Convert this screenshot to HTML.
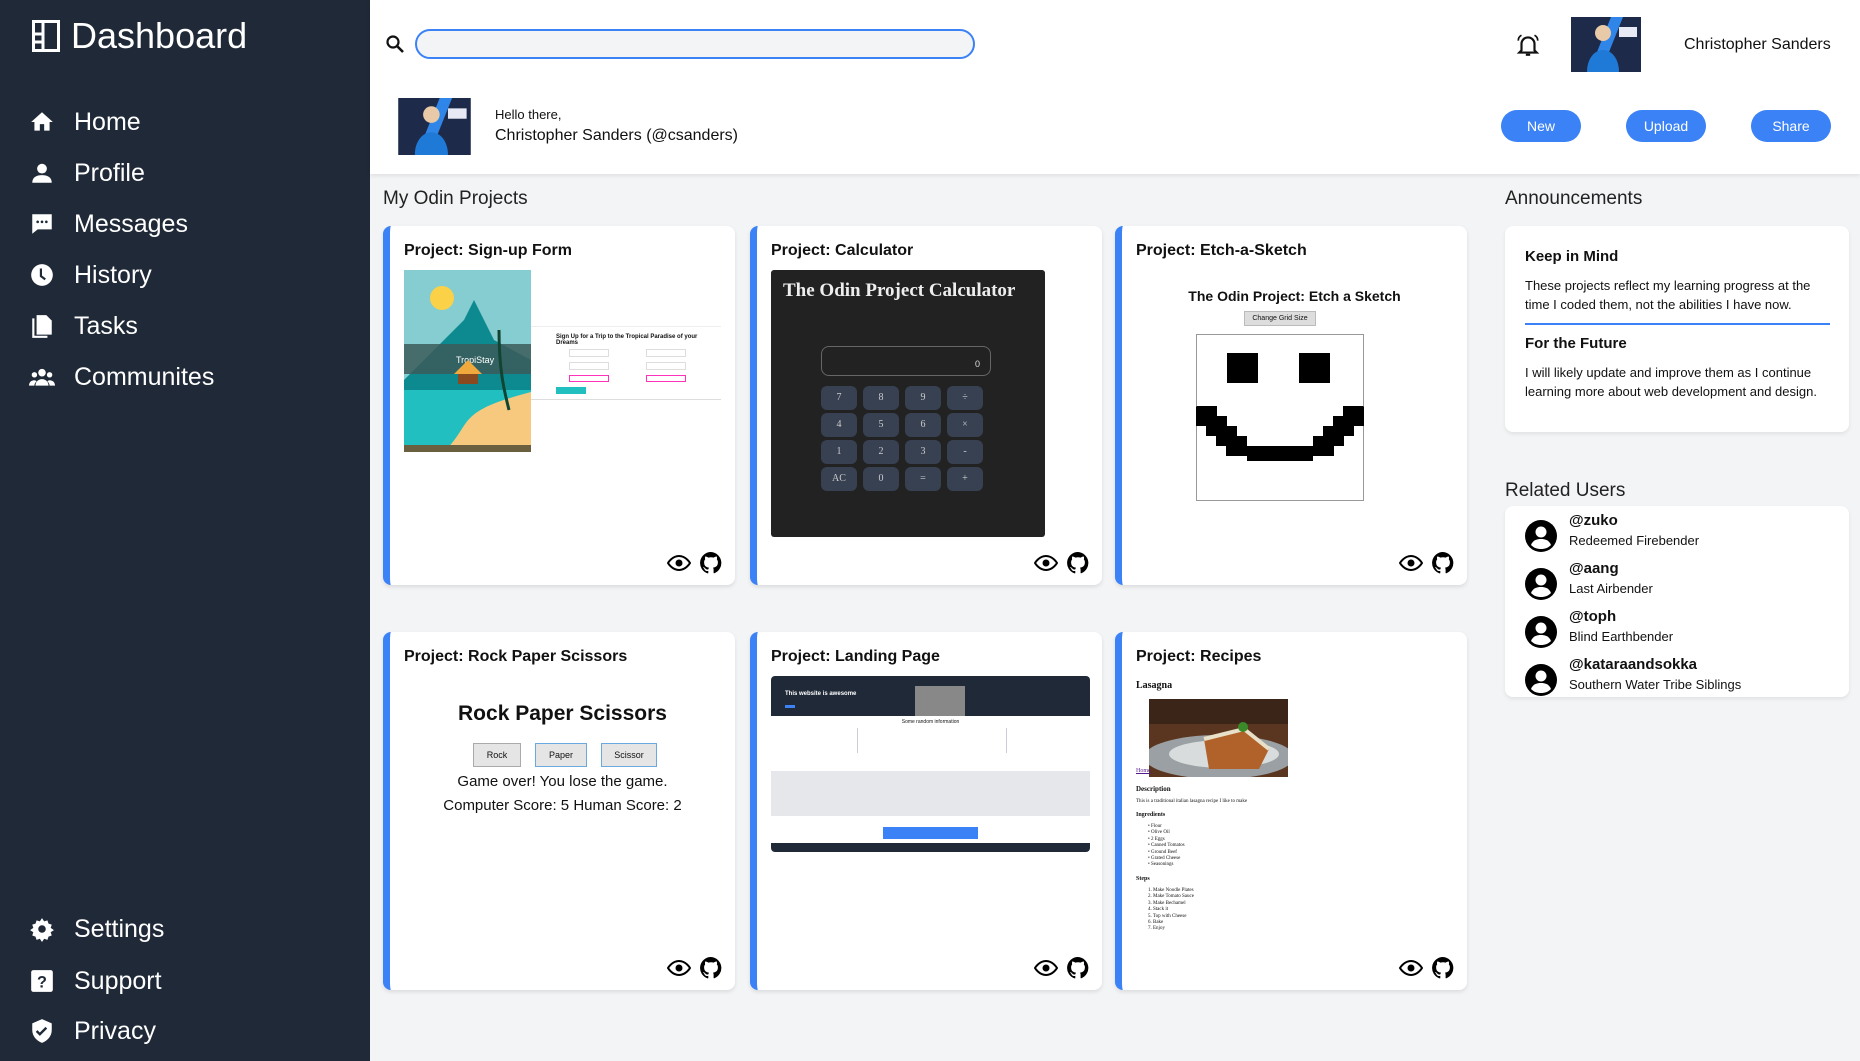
<!DOCTYPE html>
<html><head><meta charset="utf-8"><style>
*{box-sizing:border-box;margin:0;padding:0}
body{width:1860px;height:1061px;overflow:hidden;background:#f3f4f6;font-family:"Liberation Sans",sans-serif;position:relative;color:#111}
.abs{position:absolute}
#side{left:0;top:0;width:370px;height:1061px;background:#1f2937;color:#fff}
.nav{position:absolute;left:74px;font-size:25px;line-height:30px}
.ico{position:absolute;left:29px;width:26px;height:26px}
#head{left:370px;top:0;width:1490px;height:174px;background:#fff;box-shadow:0 2px 4px rgba(0,0,0,.08)}
.btn{position:absolute;top:110px;width:80px;height:32px;border-radius:16px;background:#3b82f6;color:#fff;font-size:14px;text-align:center;line-height:32px}
.card{position:absolute;width:352px;background:#fff;border-radius:8px;border-left:7px solid #3b82f6;box-shadow:0 2px 4px rgba(0,0,0,.1);overflow:hidden}
.ct{position:absolute;left:14px;top:16px;font-size:16px;font-weight:bold}
.icons{position:absolute;right:12px;bottom:10px;display:flex;gap:8px}
.h2{position:absolute;font-size:19px;color:#222}
.ann{position:absolute;background:#fff;border-radius:8px;box-shadow:0 2px 4px rgba(0,0,0,.08)}
.user{position:absolute;left:20px}
.user .n{position:absolute;left:44px;top:0;font-weight:bold;font-size:15px}
.user .s{position:absolute;left:44px;top:21px;font-size:13px;white-space:nowrap}
.cb{position:absolute;width:36px;height:24px;border-radius:6px;background:#374151;color:#ccc;font-size:10px;text-align:center;line-height:24px;font-family:"Liberation Serif",serif}
</style></head><body>
<div id="side" class="abs">
 <svg class="abs" style="left:32px;top:20px" width="28" height="32" viewBox="0 0 28 32"><rect x="1.5" y="1.5" width="25" height="29" fill="none" stroke="#fff" stroke-width="3"/><path d="M11 2v28M2 14h9M2 22h9" stroke="#fff" stroke-width="3"/></svg>
 <div class="abs" style="left:71px;top:15px;font-size:36px">Dashboard</div>
 <svg class="ico" style="top:109px" viewBox="0 0 24 24"><path d="M12 3L2 12h3v8h5v-6h4v6h5v-8h3z" fill="#fff"/></svg>
 <div class="nav" style="top:107px">Home</div>
 <svg class="ico" style="top:160px" viewBox="0 0 24 24"><circle cx="12" cy="8" r="4.5" fill="#fff"/><path d="M3 21c0-5 4-7 9-7s9 2 9 7z" fill="#fff"/></svg>
 <div class="nav" style="top:158px">Profile</div>
 <svg class="ico" style="top:211px" viewBox="0 0 24 24"><path d="M3 3h18v14H8l-5 4z" fill="#fff"/><circle cx="8" cy="10" r="1.2" fill="#1f2937"/><circle cx="12" cy="10" r="1.2" fill="#1f2937"/><circle cx="16" cy="10" r="1.2" fill="#1f2937"/></svg>
 <div class="nav" style="top:209px">Messages</div>
 <svg class="ico" style="top:262px" viewBox="0 0 24 24"><circle cx="12" cy="12" r="10" fill="#fff"/><path d="M11 6v7l4 3" stroke="#1f2937" stroke-width="2" fill="none"/></svg>
 <div class="nav" style="top:260px">History</div>
 <svg class="ico" style="top:313px" viewBox="0 0 24 24"><path d="M7 2h9l5 5v13H7z" fill="#fff"/><path d="M4 5v17h13" stroke="#fff" stroke-width="2" fill="none"/></svg>
 <div class="nav" style="top:311px">Tasks</div>
 <svg class="ico" style="top:364px" viewBox="0 0 24 24"><circle cx="12" cy="8" r="3.5" fill="#fff"/><circle cx="5" cy="10" r="2.5" fill="#fff"/><circle cx="19" cy="10" r="2.5" fill="#fff"/><path d="M6 20c0-4 3-6 6-6s6 2 6 6zM0 20c0-3 2-5 5-5 1 0 2 1 2 1-1 1-2 2-2 4zM24 20c0-3-2-5-5-5-1 0-2 1-2 1 1 1 2 2 2 4z" fill="#fff"/></svg>
 <div class="nav" style="top:362px">Communites</div>
 <svg class="ico" style="top:916px" viewBox="0 0 24 24"><path d="M12 2l2 3 3-1 1 3 3 1-1 3 3 2-3 2 1 3-3 1-1 3-3-1-2 3-2-3-3 1-1-3-3-1 1-3-3-2 3-2-1-3 3-1 1-3 3 1z" fill="#fff"/><circle cx="12" cy="12" r="3.5" fill="#1f2937"/></svg>
 <div class="nav" style="top:914px">Settings</div>
 <svg class="ico" style="top:968px" viewBox="0 0 24 24"><rect x="2" y="2" width="20" height="20" rx="2" fill="#fff"/><text x="12" y="18" font-size="15" font-weight="bold" text-anchor="middle" fill="#1f2937" font-family="Liberation Sans">?</text></svg>
 <div class="nav" style="top:966px">Support</div>
 <svg class="ico" style="top:1018px" viewBox="0 0 24 24"><path d="M12 1l9 4v6c0 6-4 10-9 12C7 21 3 17 3 11V5z" fill="#fff"/><path d="M7 12l3 3 6-6" stroke="#1f2937" stroke-width="2.2" fill="none"/></svg>
 <div class="nav" style="top:1016px">Privacy</div>
</div>

<div id="head" class="abs">
 <svg class="abs" style="left:15px;top:34px" width="20" height="20" viewBox="0 0 20 20"><circle cx="8" cy="8" r="5.5" fill="none" stroke="#111" stroke-width="2.2"/><path d="M12 12l6 6" stroke="#111" stroke-width="2.6"/></svg>
 <div class="abs" style="left:45px;top:29px;width:560px;height:30px;border:2px solid #3b82f6;border-radius:15px;background:#f3f4f6"></div>
 <svg class="abs" style="left:1145px;top:32px" width="26" height="26" viewBox="0 0 24 24"><path d="M6 17V11a6 6 0 0112 0v6l2 2H4z" fill="none" stroke="#111" stroke-width="2"/><path d="M10 21h4" stroke="#111" stroke-width="2"/><path d="M3 8c0-2 1-4 3-5M21 8c0-2-1-4-3-5" stroke="#111" stroke-width="1.6" fill="none"/></svg>
 <svg class="abs" style="left:1201px;top:17px" width="70" height="55" viewBox="0 0 70 55"><rect width="70" height="55" fill="#1e2a4a"/><path d="M40 0h12L30 55H18z" fill="#2f86e8"/><circle cx="32" cy="16" r="8" fill="#e8c9a8"/><path d="M16 55c0-14 8-22 16-22s16 8 16 22z" fill="#1e7ad6"/><rect x="48" y="10" width="18" height="10" fill="#e7e9f5"/></svg>
 <div class="abs" style="left:1314px;top:36px;font-size:16px">Christopher Sanders</div>
 <svg class="abs" style="left:28px;top:98px" width="73" height="57" viewBox="0 0 70 55"><rect width="70" height="55" fill="#1e2a4a"/><path d="M40 0h12L30 55H18z" fill="#2f86e8"/><circle cx="32" cy="16" r="8" fill="#e8c9a8"/><path d="M16 55c0-14 8-22 16-22s16 8 16 22z" fill="#1e7ad6"/><rect x="48" y="10" width="18" height="10" fill="#e7e9f5"/></svg>
 <div class="abs" style="left:125px;top:107px;font-size:13px">Hello there,</div>
 <div class="abs" style="left:125px;top:127px;font-size:16px">Christopher Sanders (@csanders)</div>
 <div class="btn" style="left:1131px">New</div>
 <div class="btn" style="left:1256px">Upload</div>
 <div class="btn" style="left:1381px">Share</div>
</div>

<div class="h2" style="left:383px;top:188px">My Odin Projects</div>

<!-- Row 1 -->
<div class="card" style="left:383px;top:226px;height:359px">
 <div class="ct">Project: Sign-up Form</div>
 <svg class="abs" style="left:14px;top:44px" width="127" height="182" viewBox="0 0 127 182"><rect width="127" height="182" fill="#85cdd0"/><circle cx="38" cy="28" r="12" fill="#fbd147"/><path d="M0 110L40 70 60 50 70 30 90 70 127 90V182H0z" fill="#0d8a8f"/><rect y="74" width="127" height="30" fill="#3c5a5a" opacity=".85"/><text x="52" y="93" font-size="9" fill="#fff" font-family="Liberation Sans">TropiStay</text><path d="M0 120h127v62H0z" fill="#22bfc0"/><path d="M40 182c30-30 10-40 87-60v60z" fill="#f7c97e"/><path d="M50 104l14-14 14 14z" fill="#f0a93c"/><rect x="54" y="104" width="20" height="10" fill="#8a4a20"/><path d="M95 60c0 40 5 60 10 80" stroke="#143" stroke-width="3" fill="none"/><rect y="175" width="127" height="7" fill="#6a6040"/></svg>
 <div class="abs" style="left:141px;top:100px;width:190px;height:74px;border-top:1px solid #eee;border-bottom:1px solid #ddd">
  <div class="abs" style="left:25px;top:7px;font-size:6px;font-weight:bold">Sign Up for a Trip to the Tropical Paradise of your Dreams</div>
  <div class="abs" style="left:38px;top:22px;width:40px;height:8px;border:1px solid #ddd"></div><div class="abs" style="left:115px;top:22px;width:40px;height:8px;border:1px solid #ddd"></div>
  <div class="abs" style="left:38px;top:35px;width:40px;height:8px;border:1px solid #ddd"></div><div class="abs" style="left:115px;top:35px;width:40px;height:8px;border:1px solid #ddd"></div>
  <div class="abs" style="left:38px;top:48px;width:40px;height:7px;border:1px solid #f3b"></div><div class="abs" style="left:115px;top:48px;width:40px;height:7px;border:1px solid #f3b"></div>
  <div class="abs" style="left:25px;top:60px;width:30px;height:7px;background:#22bfc0"></div>
 </div>
 <div class="icons"><svg width="24" height="24" viewBox="0 0 24 24"><path d="M1 12s4-7 11-7 11 7 11 7-4 7-11 7S1 12 1 12z" fill="none" stroke="#000" stroke-width="2"/><circle cx="12" cy="12" r="3.5"/></svg><svg width="24" height="24" viewBox="0 0 24 24"><path d="M12 1a11 11 0 00-3.5 21.4c.6.1.8-.2.8-.5v-2c-3 .7-3.7-1.4-3.7-1.4-.5-1.3-1.2-1.6-1.2-1.6-1-.7.1-.7.1-.7 1.1.1 1.7 1.1 1.7 1.1 1 1.7 2.6 1.2 3.2.9.1-.7.4-1.2.7-1.5-2.4-.3-5-1.2-5-5.4 0-1.2.4-2.2 1.1-2.9-.1-.3-.5-1.4.1-2.9 0 0 .9-.3 3 1.1a10 10 0 015.4 0c2.1-1.4 3-1.1 3-1.1.6 1.5.2 2.6.1 2.9.7.7 1.1 1.7 1.1 2.9 0 4.2-2.6 5.1-5 5.4.4.3.7 1 .7 2v3c0 .3.2.6.8.5A11 11 0 0012 1z"/></svg></div>
</div>

<div class="card" style="left:750px;top:226px;height:359px">
 <div class="ct">Project: Calculator</div>
 <div class="abs" style="left:14px;top:44px;width:274px;height:267px;background:#222;border-radius:3px">
  <div class="abs" style="left:12px;top:10px;font-family:'Liberation Serif',serif;font-weight:bold;color:#eee;font-size:19px">The Odin Project Calculator</div>
  <div class="abs" style="left:50px;top:76px;width:170px;height:30px;border:1px solid #666;border-radius:8px;color:#ddd;font-size:9px;text-align:right;padding:12px 10px 0 0">0</div>
  <div class="cb" style="left:50px;top:116px">7</div><div class="cb" style="left:92px;top:116px">8</div><div class="cb" style="left:134px;top:116px">9</div><div class="cb" style="left:176px;top:116px">÷</div>
  <div class="cb" style="left:50px;top:143px">4</div><div class="cb" style="left:92px;top:143px">5</div><div class="cb" style="left:134px;top:143px">6</div><div class="cb" style="left:176px;top:143px">×</div>
  <div class="cb" style="left:50px;top:170px">1</div><div class="cb" style="left:92px;top:170px">2</div><div class="cb" style="left:134px;top:170px">3</div><div class="cb" style="left:176px;top:170px">-</div>
  <div class="cb" style="left:50px;top:197px">AC</div><div class="cb" style="left:92px;top:197px">0</div><div class="cb" style="left:134px;top:197px">=</div><div class="cb" style="left:176px;top:197px">+</div>
 </div>
 <div class="icons"><svg width="24" height="24" viewBox="0 0 24 24"><path d="M1 12s4-7 11-7 11 7 11 7-4 7-11 7S1 12 1 12z" fill="none" stroke="#000" stroke-width="2"/><circle cx="12" cy="12" r="3.5"/></svg><svg width="24" height="24" viewBox="0 0 24 24"><path d="M12 1a11 11 0 00-3.5 21.4c.6.1.8-.2.8-.5v-2c-3 .7-3.7-1.4-3.7-1.4-.5-1.3-1.2-1.6-1.2-1.6-1-.7.1-.7.1-.7 1.1.1 1.700 1.1 1.7 1.1 1 1.7 2.6 1.2 3.2.9.1-.7.4-1.2.7-1.5-2.4-.3-5-1.200-5-5.4 0-1.2.4-2.2 1.1-2.9-.1-.3-.5-1.4.1-2.9 0 0 .9-.3 3 1.1a10 10 0 015.4 0c2.1-1.4 3-1.1 3-1.1.6 1.5.2 2.6.1 2.9.7.7 1.1 1.7 1.1 2.9 0 4.2-2.6 5.1-5 5.4.4.3.7 1 .7 2v3c0 .3.2.6.8.5A11 11 0 0012 1z"/></svg></div>
</div>

<div class="card" style="left:1115px;top:226px;height:359px">
 <div class="ct">Project: Etch-a-Sketch</div>
 <div class="abs" style="left:0;width:345px;top:62px;text-align:center;font-size:14px;font-weight:bold">The Odin Project: Etch a Sketch</div>
 <div class="abs" style="left:122px;top:85px;width:72px;height:15px;background:#ddd;border:1px solid #bbb;font-size:7px;text-align:center;line-height:13px">Change Grid Size</div>
 <svg class="abs" style="left:74px;top:108px" width="168" height="167" viewBox="0 0 168 167"><rect x=".5" y=".5" width="167" height="166" fill="#fff" stroke="#999"/><rect x="31" y="19" width="31" height="30"/><rect x="103" y="19" width="31" height="30"/><path d="M1 72h20v10h10v10h10v10h10v10h10v10h-31v-10h-10v-10h-10v-10h-10v-10h-10zM167 72h-20v10h-10v10h-10v10h-10v10h-10v10h31v-10h10v-10h10v-10h10v-10h10z"/><rect x="51" y="112" width="66" height="15"/></svg>
 <div class="icons"><svg width="24" height="24" viewBox="0 0 24 24"><path d="M1 12s4-7 11-7 11 7 11 7-4 7-11 7S1 12 1 12z" fill="none" stroke="#000" stroke-width="2"/><circle cx="12" cy="12" r="3.5"/></svg><svg width="24" height="24" viewBox="0 0 24 24"><path d="M12 1a11 11 0 00-3.5 21.4c.6.1.8-.2.8-.5v-2c-3 .7-3.7-1.4-3.7-1.4-.5-1.3-1.2-1.6-1.2-1.6-1-.7.1-.7.1-.7 1.1.1 1.7 1.1 1.7 1.1 1 1.7 2.6 1.2 3.2.9.1-.7.4-1.2.7-1.5-2.4-.3-5-1.2-5-5.4 0-1.2.4-2.2 1.1-2.9-.1-.3-.5-1.4.1-2.9 0 0 .9-.3 3 1.1a10 10 0 015.4 0c2.1-1.4 3-1.1 3-1.1.6 1.5.2 2.6.1 2.9.7.7 1.1 1.7 1.1 2.9 0 4.2-2.6 5.1-5 5.4.4.3.7 1 .7 2v3c0 .3.2.6.8.5A11 11 0 0012 1z"/></svg></div>
</div>

<!-- Row 2 -->
<div class="card" style="left:383px;top:632px;height:358px">
 <div class="ct">Project: Rock Paper Scissors</div>
 <div class="abs" style="left:0;width:345px;top:70px;text-align:center;font-size:21px;font-weight:bold">Rock Paper Scissors</div>
 <div class="abs" style="left:83px;top:111px;width:48px;height:24px;background:#e5e5e5;border:1px solid #aaa;font-size:9px;text-align:center;line-height:22px">Rock</div>
 <div class="abs" style="left:145px;top:111px;width:52px;height:24px;background:#e5e5e5;border:1px solid #6aa8e0;font-size:9px;text-align:center;line-height:22px">Paper</div>
 <div class="abs" style="left:211px;top:111px;width:56px;height:24px;background:#e5e5e5;border:1px solid #6aa8e0;font-size:9px;text-align:center;line-height:22px">Scissor</div>
 <div class="abs" style="left:0;width:345px;top:141px;text-align:center;font-size:15px">Game over! You lose the game.</div>
 <div class="abs" style="left:0;width:345px;top:165px;text-align:center;font-size:15px">Computer Score: 5 Human Score: 2</div>
 <div class="icons"><svg width="24" height="24" viewBox="0 0 24 24"><path d="M1 12s4-7 11-7 11 7 11 7-4 7-11 7S1 12 1 12z" fill="none" stroke="#000" stroke-width="2"/><circle cx="12" cy="12" r="3.5"/></svg><svg width="24" height="24" viewBox="0 0 24 24"><path d="M12 1a11 11 0 00-3.5 21.4c.6.1.8-.2.8-.5v-2c-3 .7-3.7-1.4-3.7-1.4-.5-1.3-1.2-1.6-1.2-1.6-1-.7.1-.7.1-.7 1.1.1 1.7 1.1 1.7 1.1 1 1.7 2.6 1.2 3.2.9.1-.7.4-1.2.7-1.5-2.4-.3-5-1.2-5-5.4 0-1.2.4-2.2 1.1-2.9-.1-.3-.5-1.4.1-2.9 0 0 .9-.3 3 1.1a10 10 0 015.4 0c2.1-1.4 3-1.1 3-1.1.6 1.5.2 2.6.1 2.9.7.7 1.1 1.7 1.1 2.9 0 4.2-2.6 5.1-5 5.4.4.3.7 1 .7 2v3c0 .3.2.6.8.5A11 11 0 0012 1z"/></svg></div>
</div>

<div class="card" style="left:750px;top:632px;height:358px">
 <div class="ct">Project: Landing Page</div>
 <div class="abs" style="left:14px;top:44px;width:319px;height:175px">
  <div class="abs" style="left:0;top:0;width:319px;height:40px;background:#1f2937;border-radius:4px 4px 0 0"></div>
  <div class="abs" style="left:14px;top:15px;font-size:6px;color:#fff;font-weight:bold">This website is awesome</div>
  <div class="abs" style="left:14px;top:29px;width:10px;height:3px;background:#3b82f6"></div>
  <div class="abs" style="left:144px;top:10px;width:50px;height:30px;background:#888"></div>
  <div class="abs" style="left:0;top:43px;width:319px;text-align:center;font-size:5px">Some random information</div>
  <div class="abs" style="left:86px;top:52px;width:150px;height:25px;border-left:1px solid #ccd;border-right:1px solid #ccd"></div>
  <div class="abs" style="left:0;top:95px;width:319px;height:45px;background:#e5e7eb"></div>
  <div class="abs" style="left:112px;top:151px;width:95px;height:12px;background:#3b82f6"></div>
  <div class="abs" style="left:0;top:167px;width:319px;height:9px;background:#1f2937;border-radius:0 0 4px 4px"></div>
 </div>
 <div class="icons"><svg width="24" height="24" viewBox="0 0 24 24"><path d="M1 12s4-7 11-7 11 7 11 7-4 7-11 7S1 12 1 12z" fill="none" stroke="#000" stroke-width="2"/><circle cx="12" cy="12" r="3.5"/></svg><svg width="24" height="24" viewBox="0 0 24 24"><path d="M12 1a11 11 0 00-3.5 21.4c.6.1.8-.2.8-.5v-2c-3 .7-3.7-1.4-3.7-1.4-.5-1.3-1.2-1.6-1.2-1.6-1-.7.1-.7.1-.7 1.1.1 1.7 1.1 1.7 1.1 1 1.7 2.6 1.2 3.2.9.1-.7.4-1.2.7-1.5-2.4-.3-5-1.2-5-5.4 0-1.2.4-2.2 1.1-2.9-.1-.3-.5-1.4.1-2.9 0 0 .9-.3 3 1.1a10 10 0 015.4 0c2.1-1.4 3-1.1 3-1.1.6 1.5.2 2.6.1 2.9.7.7 1.1 1.7 1.1 2.9 0 4.2-2.6 5.1-5 5.4.4.3.7 1 .7 2v3c0 .3.2.6.8.5A11 11 0 0012 1z"/></svg></div>
</div>

<div class="card" style="left:1115px;top:632px;height:358px;font-family:'Liberation Serif',serif">
 <div class="ct" style="font-family:'Liberation Sans',sans-serif">Project: Recipes</div>
 <div class="abs" style="left:14px;top:48px;font-size:10px;font-weight:bold">Lasagna</div>
 <svg class="abs" style="left:27px;top:67px" width="139" height="78" viewBox="0 0 139 78"><rect width="139" height="78" fill="#5a3520"/><rect y="0" width="139" height="25" fill="#3a2518"/><ellipse cx="70" cy="58" rx="75" ry="22" fill="#9aa0a3"/><ellipse cx="75" cy="55" rx="55" ry="14" fill="#d8dcdc"/><path d="M55 40l40-10 25 20-10 20-50 0z" fill="#b0622a"/><path d="M55 40l40-10 25 20" fill="none" stroke="#e8e0c8" stroke-width="4"/><circle cx="94" cy="28" r="5" fill="#3a8a2a"/></svg>
 <div class="abs" style="left:14px;top:136px;font-size:6px;color:#551a8b;text-decoration:underline">Home</div>
 <div class="abs" style="left:14px;top:153px;font-size:7px;font-weight:bold">Description</div>
 <div class="abs" style="left:14px;top:167px;font-size:5px">This is a traditional italian lasagna recipe I like to make</div>
 <div class="abs" style="left:14px;top:180px;font-size:6px;font-weight:bold">Ingredients</div>
 <div class="abs" style="left:26px;top:192px;font-size:5px;line-height:6.4px">• Flour<br>• Olive Oil<br>• 2 Eggs<br>• Canned Tomatos<br>• Ground Beef<br>• Grated Cheese<br>• Seasonings</div>
 <div class="abs" style="left:14px;top:244px;font-size:6px;font-weight:bold">Steps</div>
 <div class="abs" style="left:26px;top:256px;font-size:5px;line-height:6.4px">1. Make Noodle Plates<br>2. Make Tomato Sauce<br>3. Make Bechamel<br>4. Stack it<br>5. Top with Cheese<br>6. Bake<br>7. Enjoy</div>
 <div class="icons"><svg width="24" height="24" viewBox="0 0 24 24"><path d="M1 12s4-7 11-7 11 7 11 7-4 7-11 7S1 12 1 12z" fill="none" stroke="#000" stroke-width="2"/><circle cx="12" cy="12" r="3.5"/></svg><svg width="24" height="24" viewBox="0 0 24 24"><path d="M12 1a11 11 0 00-3.5 21.4c.6.1.8-.2.8-.5v-2c-3 .7-3.7-1.4-3.7-1.4-.5-1.3-1.2-1.6-1.2-1.6-1-.7.1-.7.1-.7 1.1.1 1.7 1.1 1.7 1.1 1 1.7 2.6 1.2 3.2.9.1-.7.4-1.2.7-1.5-2.4-.3-5-1.2-5-5.4 0-1.2.4-2.2 1.1-2.9-.1-.3-.5-1.4.1-2.9 0 0 .9-.3 3 1.1a10 10 0 015.4 0c2.1-1.4 3-1.1 3-1.1.6 1.5.2 2.6.1 2.9.7.7 1.1 1.7 1.1 2.9 0 4.2-2.6 5.1-5 5.4.4.3.7 1 .7 2v3c0 .3.2.6.8.5A11 11 0 0012 1z"/></svg></div>
</div>

<!-- Right column -->
<div class="h2" style="left:1505px;top:188px">Announcements</div>
<div class="ann" style="left:1505px;top:226px;width:344px;height:206px">
 <div class="abs" style="left:20px;top:22px;font-size:15px;font-weight:bold">Keep in Mind</div>
 <div class="abs" style="left:20px;top:50px;font-size:13px;line-height:19px;width:310px">These projects reflect my learning progress at the time I coded them, not the abilities I have now.</div>
 <div class="abs" style="left:20px;top:97px;width:305px;height:2px;background:#3b82f6"></div>
 <div class="abs" style="left:20px;top:109px;font-size:15px;font-weight:bold">For the Future</div>
 <div class="abs" style="left:20px;top:137px;font-size:13px;line-height:19px;width:310px">I will likely update and improve them as I continue learning more about web development and design.</div>
</div>
<div class="h2" style="left:1505px;top:480px">Related Users</div>
<div class="ann" style="left:1505px;top:506px;width:344px;height:191px">
 <div class="user" style="top:6px"><svg class="abs" style="left:0;top:8px" width="32" height="32" viewBox="0 0 32 32"><circle cx="16" cy="16" r="16"/><circle cx="16" cy="12" r="5.5" fill="#fff"/><path d="M6 25c2-5 6-6 10-6s8 1 10 6c-3 3-6 4-10 4s-7-1-10-4z" fill="#fff"/></svg><div class="n">@zuko</div><div class="s">Redeemed Firebender</div></div>
 <div class="user" style="top:54px"><svg class="abs" style="left:0;top:8px" width="32" height="32" viewBox="0 0 32 32"><circle cx="16" cy="16" r="16"/><circle cx="16" cy="12" r="5.5" fill="#fff"/><path d="M6 25c2-5 6-6 10-6s8 1 10 6c-3 3-6 4-10 4s-7-1-10-4z" fill="#fff"/></svg><div class="n">@aang</div><div class="s">Last Airbender</div></div>
 <div class="user" style="top:102px"><svg class="abs" style="left:0;top:8px" width="32" height="32" viewBox="0 0 32 32"><circle cx="16" cy="16" r="16"/><circle cx="16" cy="12" r="5.5" fill="#fff"/><path d="M6 25c2-5 6-6 10-6s8 1 10 6c-3 3-6 4-10 4s-7-1-10-4z" fill="#fff"/></svg><div class="n">@toph</div><div class="s">Blind Earthbender</div></div>
 <div class="user" style="top:150px"><svg class="abs" style="left:0;top:8px" width="32" height="32" viewBox="0 0 32 32"><circle cx="16" cy="16" r="16"/><circle cx="16" cy="12" r="5.5" fill="#fff"/><path d="M6 25c2-5 6-6 10-6s8 1 10 6c-3 3-6 4-10 4s-7-1-10-4z" fill="#fff"/></svg><div class="n">@kataraandsokka</div><div class="s">Southern Water Tribe Siblings</div></div>
</div>
</body></html>
